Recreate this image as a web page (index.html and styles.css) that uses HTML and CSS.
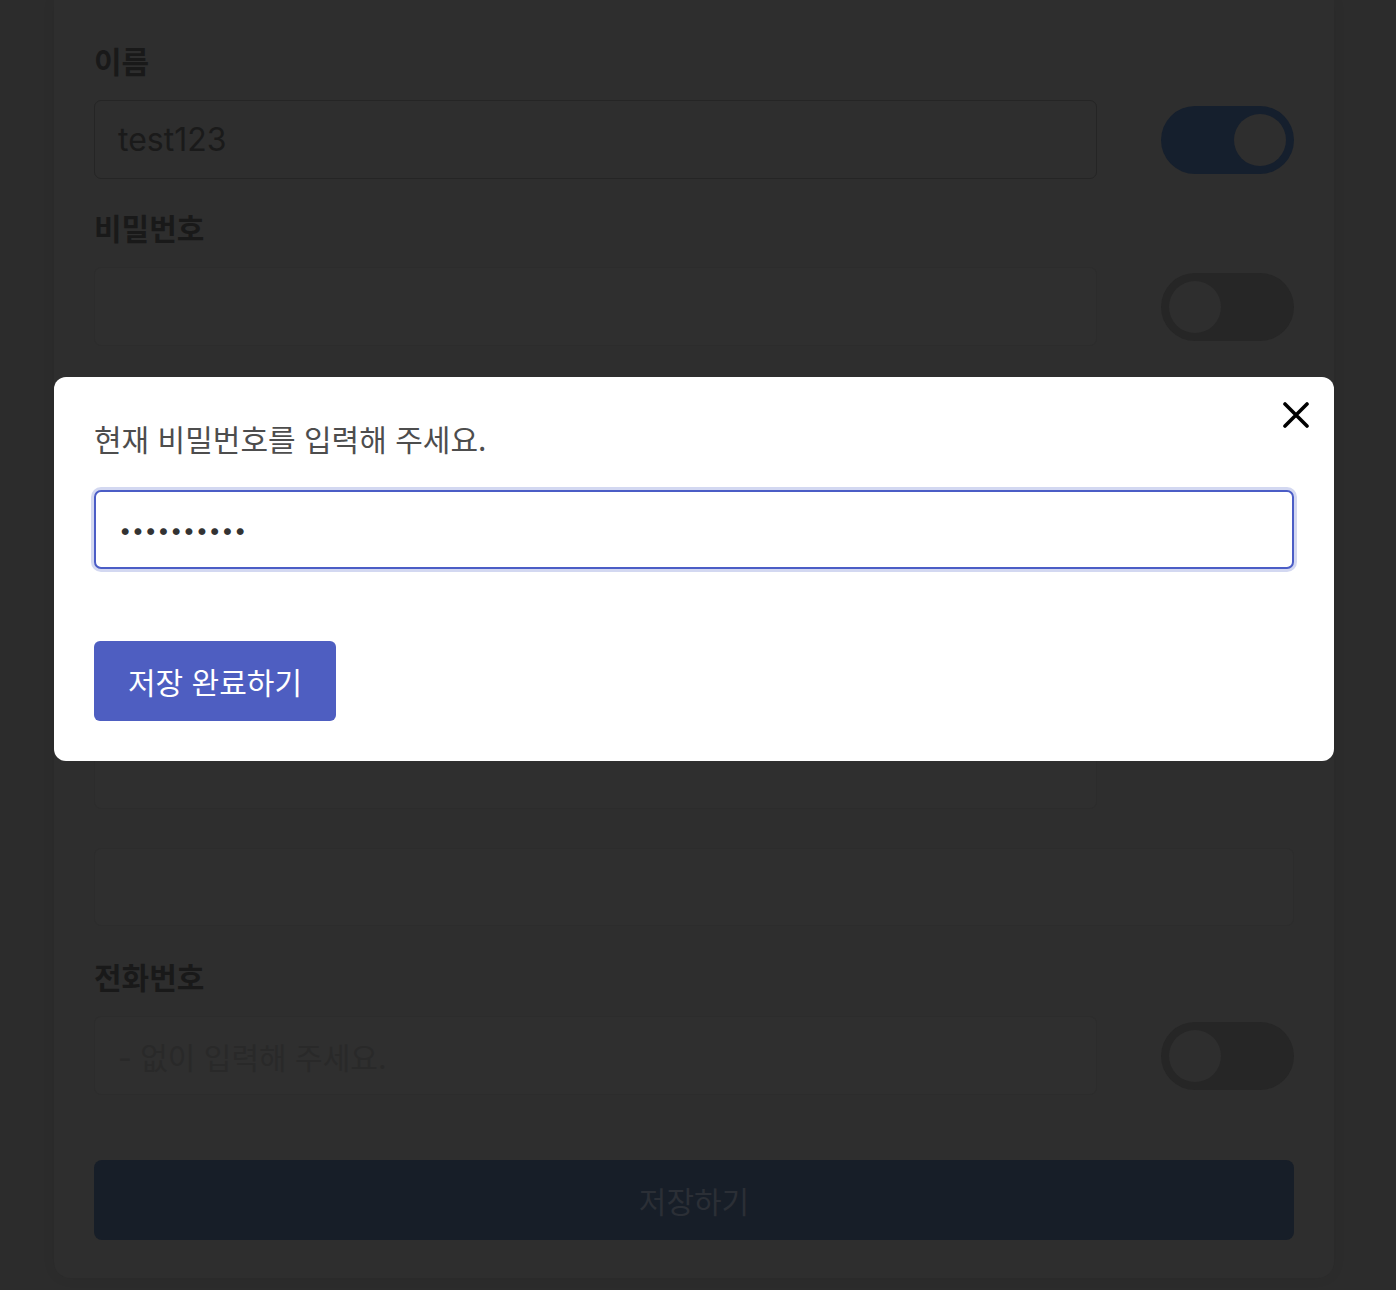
FILE: index.html
```html
<!DOCTYPE html>
<html lang="ko">
<head>
<meta charset="utf-8">
<title>회원 정보 수정</title>
<link rel="stylesheet" href="styles.css">
</head>
<body>
<main class="page">
  <section class="card">
    <div class="field">
      <label class="label">이름</label>
      <div class="row">
        <div class="input">test123</div>
        <span class="toggle on"><span class="knob"></span></span>
      </div>
    </div>
    <div class="field">
      <label class="label">비밀번호</label>
      <div class="row">
        <div class="input disabled"></div>
        <span class="toggle"><span class="knob"></span></span>
      </div>
    </div>
    <div class="field">
      <label class="label">새 비밀번호</label>
      <div class="row">
        <div class="input disabled"></div>
        <span class="toggle"><span class="knob"></span></span>
      </div>
    </div>
    <div class="field">
      <label class="label">새 비밀번호 확인</label>
      <div class="row">
        <div class="input disabled"></div>
        <span class="toggle"><span class="knob"></span></span>
      </div>
      <div class="row sub">
        <div class="input disabled"></div>
        <span class="toggle-space"></span>
      </div>
      <div class="input disabled wide"></div>
    </div>
    <div class="field phone">
      <label class="label">전화번호</label>
      <div class="row">
        <div class="input disabled placeholder">- 없이 입력해 주세요.</div>
        <span class="toggle"><span class="knob"></span></span>
      </div>
    </div>
    <button class="save" type="button">저장하기</button>
  </section>
</main>

<div class="modal" role="dialog" aria-modal="true">
  <button class="close" type="button" aria-label="닫기">
    <svg width="26" height="26" viewBox="0 0 26 26" aria-hidden="true">
      <path d="M2 2 L24 24 M24 2 L2 24" stroke="#000" stroke-width="3.6" stroke-linecap="round" fill="none"/>
    </svg>
  </button>
  <p class="modal-title">현재 비밀번호를 입력해 주세요.</p>
  <input class="modal-input" type="password" value="1234567890">
  <button class="confirm" type="button">저장 완료하기</button>
</div>
</body>
</html>
```

FILE: styles.css
```css
* { box-sizing: border-box; }

html, body {
  margin: 0;
  padding: 0;
}

body {
  background: #2c2c2c;
  font-family: "Inter", "Noto Sans CJK KR", sans-serif;
  height: 1290px;
  overflow: hidden;
}

.page {
  padding-left: 54px;
}

.card {
  width: 1280px;
  background: #2e2e2e;
  border-radius: 0 0 16px 16px;
  padding: 40px 40px 38px;
  box-shadow: 0 0 14px rgba(0, 0, 0, 0.06);
  display: flex;
  flex-direction: column;
  gap: 28px;
}

.field {
  display: flex;
  flex-direction: column;
}

.label {
  font-family: "Noto Sans CJK KR", sans-serif;
  font-weight: 700;
  font-size: 30px;
  line-height: 40px;
  color: #191919;
  margin-bottom: 20px;
}

.row {
  display: flex;
  align-items: center;
  gap: 64px;
}

.row.sub {
  margin-top: 50px;
}

.input {
  width: 1003px;
  height: 79px;
  border: 1px solid #252525;
  border-radius: 7px;
  background: #2e2e2e;
  padding: 0 23px;
  display: flex;
  align-items: center;
  font-size: 32px;
  color: #1a1a1a;
}

.input.disabled {
  background: #2f2f2f;
  border-color: #2c2c2c;
}

.input.wide {
  width: 1200px;
  margin-top: 39px;
  height: 78px;
}

.input.placeholder {
  color: #292929;
  font-size: 30px;
  padding-left: 23px;
}

.toggle {
  width: 133px;
  height: 68px;
  border-radius: 34px;
  background: #262626;
  padding: 8px;
  display: flex;
  justify-content: flex-start;
}

.toggle.on {
  background: #151f2d;
  justify-content: flex-end;
}

.toggle-space {
  width: 133px;
}

.knob {
  width: 52px;
  height: 52px;
  border-radius: 50%;
  background: #2e2e2e;
}

.phone {
  margin-top: 2px;
}

.save {
  margin-top: 37px;
  width: 1200px;
  height: 80px;
  border: 0;
  border-radius: 8px;
  background: #171e28;
  color: #2b2f36;
  font-family: "Noto Sans CJK KR", sans-serif;
  font-size: 30px;
}

/* modal */
.modal {
  position: absolute;
  left: 54px;
  top: 377px;
  width: 1280px;
  background: #ffffff;
  border-radius: 12px;
  padding: 40px;
  display: flex;
  flex-direction: column;
  align-items: flex-start;
}

.close {
  position: absolute;
  top: 25px;
  right: 25px;
  width: 26px;
  height: 26px;
  padding: 0;
  border: 0;
  background: none;
  display: flex;
}

.modal-title {
  margin: 0;
  font-family: "Noto Sans CJK KR", sans-serif;
  font-size: 30px;
  line-height: 42px;
  color: #4d4d4d;
}

.modal-input {
  margin-top: 31px;
  width: 1200px;
  height: 79px;
  border: 2px solid #4b5dc6;
  border-radius: 7px;
  box-shadow: 0 0 0 3px #d3d8f1;
  outline: none;
  padding: 0 23px;
  font-family: "Inter", sans-serif;
  font-size: 22px;
  letter-spacing: 0.4px;
  color: #333333;
  background: #ffffff;
}

.confirm {
  margin-top: 72px;
  width: 242px;
  height: 80px;
  border: 0;
  border-radius: 6px;
  background: #4e5ec1;
  color: #ffffff;
  font-family: "Noto Sans CJK KR", sans-serif;
  font-size: 30px;
  padding: 0;
}
```
